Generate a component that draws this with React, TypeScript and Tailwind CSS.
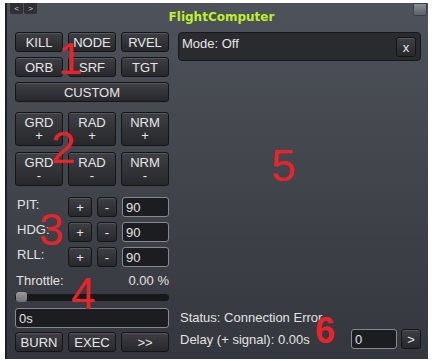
import React from "react";

const btn =
  "flex items-center justify-center rounded-[3px] border border-[#141517] bg-gradient-to-b from-[#3e4045] to-[#26282b] text-[13px] leading-none text-[#e6e6e6] shadow-[inset_0_1px_0_rgba(255,255,255,0.12)]";
const field =
  "flex items-center rounded-[3px] border border-[#86888c] bg-[#1c1d20] pl-[3px] text-[13px] leading-none text-[#e2e2e2]";

function AxisRow({ label }: { label: string }) {
  return (
    <div className="mt-[5px] flex h-[20px] items-start first:mt-[11px]">
      <div className="w-[53px] pl-[2px] pt-[1px] text-[13px] leading-[14px] text-[#e2e2e2]">{label}</div>
      <div className={`${btn} h-[20px] w-[24px]`}>+</div>
      <div className={`${btn} ml-[5px] h-[20px] w-[20px]`}>-</div>
      <div className={`${field} ml-[5px] h-[20px] w-[47px]`}>90</div>
    </div>
  );
}

export default function App() {
  return (
    <div className="relative h-[361px] w-[435px] bg-white font-['Liberation_Sans',Arial,sans-serif]">
      <div className="ml-[5px] h-[3px]" />
      <div className="ml-[5px] flex h-[356px] w-[423px] flex-col border-l-2 border-[#1e1f22] bg-gradient-to-b from-[#4e525a] to-[#34373d]">
        {/* header */}
        <div className="flex h-[29px] items-start">
          <div className="ml-[3px] flex gap-px">
            <div className="flex h-[11px] w-[13px] items-center justify-center rounded-b-[2px] bg-[#2e3034] text-[8px] leading-none text-[#d8d8d8]">&lt;</div>
            <div className="flex h-[11px] w-[13px] items-center justify-center rounded-b-[2px] bg-[#2e3034] text-[8px] leading-none text-[#d8d8d8]">&gt;</div>
          </div>
          <div className="flex-1 pr-[7px] pt-[6px] text-center font-['DejaVu_Sans',sans-serif] text-[12px] font-bold leading-[16px] text-[#bdf02a]">
            FlightComputer
          </div>
          <div className="mr-px h-[13px] w-[14px] rounded-b-[2px] border border-[#3a3d42] bg-gradient-to-b from-[#8a8f98] to-[#5c6068]" />
        </div>

        {/* body */}
        <div className="flex flex-1 pb-[7px] pl-[8px]">
          {/* left column */}
          <div className="flex w-[154px] flex-col">
            <div className="grid grid-cols-3 gap-x-[5px] gap-y-[5px]">
              {["KILL", "NODE", "RVEL", "ORB", "SRF", "TGT"].map((t) => (
                <div key={t} className={`${btn} h-[20px]`}>{t}</div>
              ))}
            </div>
            <div className={`${btn} mt-[5px] h-[20px]`}>CUSTOM</div>
            <div className="mt-[10px] grid grid-cols-3 gap-x-[5px] gap-y-[6px]">
              {["GRD", "RAD", "NRM"].map((t) => (
                <div key={t + "p"} className={`${btn} h-[34px] flex-col leading-[14px]`}>
                  <span>{t}</span>
                  <span>+</span>
                </div>
              ))}
              {["GRD", "RAD", "NRM"].map((t) => (
                <div key={t + "m"} className={`${btn} h-[34px] flex-col leading-[14px]`}>
                  <span>{t}</span>
                  <span>-</span>
                </div>
              ))}
            </div>
            <div className="flex flex-col">
              <AxisRow label="PIT:" />
              <AxisRow label="HDG:" />
              <AxisRow label="RLL:" />
            </div>
            <div className="mt-[6px] flex h-[14px] items-center justify-between pl-[1px] text-[13px] leading-none text-[#e2e2e2]">
              <span>Throttle:</span>
              <span>0.00 %</span>
            </div>
            <div className="relative mt-[5px] flex h-[10px] items-center">
              <div className="h-[7px] w-full rounded-full bg-[#17181a]" />
              <div className="absolute left-[1px] top-0 h-[10px] w-[11px] rounded-[3px] bg-gradient-to-b from-[#9a9ca0] to-[#6e7074]" />
            </div>
            <div className={`${field} mt-[6px] h-[20px]`}>0s</div>
            <div className="mt-[4px] grid grid-cols-3 gap-x-[5px]">
              {["BURN", "EXEC", ">>"].map((t) => (
                <div key={t} className={`${btn} h-[20px]`}>{t}</div>
              ))}
            </div>
          </div>

          {/* right column */}
          <div className="ml-[9px] flex w-[243px] flex-col pb-[3px]">
            <div className="flex h-[29px] items-start justify-between rounded-[4px] border border-[#17181a] bg-[#2a2b2f] pl-[3px] pr-[4px]">
              <span className="pt-[4px] text-[13px] leading-[14px] text-[#e6e6e6]">Mode: Off</span>
              <div className={`${btn} mt-[4px] h-[20px] w-[20px] border-[#0f1012]`}>x</div>
            </div>
            <div className="flex-1" />
            <div className="pl-[2px] text-[13px] leading-[16px] text-[#e2e2e2]">Status: Connection Error</div>
            <div className="mt-[3px] flex h-[20px] items-center">
              <span className="flex-1 pl-[2px] text-[13px] leading-none text-[#e2e2e2]">Delay (+ signal): 0.00s</span>
              <div className={`${field} h-[20px] w-[46px]`}>0</div>
              <div className={`${btn} ml-[4px] h-[20px] w-[20px]`}>&gt;</div>
            </div>
          </div>
        </div>
      </div>

      {/* red annotation numbers */}
      <div className="pointer-events-none absolute inset-0 text-[44px] leading-none text-[#e8232a]">
        <span className="absolute left-[58px] top-[37px]">1</span>
        <span className="absolute left-[51px] top-[126px]">2</span>
        <span className="absolute left-[39px] top-[208px]">3</span>
        <span className="absolute left-[71px] top-[272px]">4</span>
        <span className="absolute left-[271px] top-[144px]">5</span>
        <span className="absolute left-[315px] top-[313px] text-[36px] font-bold">6</span>
      </div>
    </div>
  );
}
